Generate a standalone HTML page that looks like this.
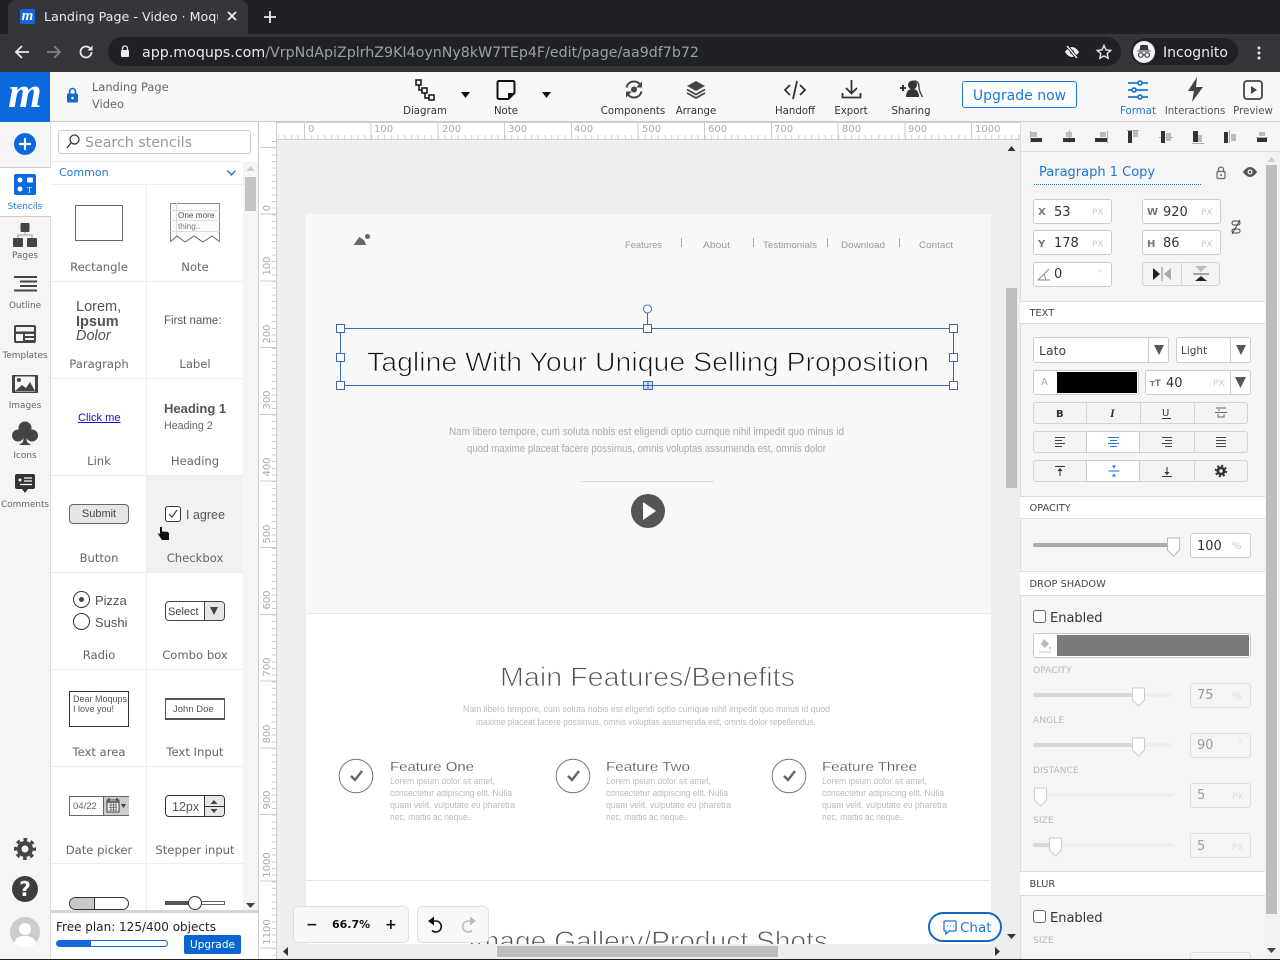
<!DOCTYPE html>
<html lang="en"><head><meta charset="utf-8"><title>Landing Page - Video · Moqups</title>
<style>
html,body{margin:0;padding:0;width:1280px;height:960px;overflow:hidden;background:#f5f5f5}
body{position:relative;font-family:"DejaVu Sans","Liberation Sans",sans-serif;color:#333}
.a{position:absolute;box-sizing:border-box}
.t{position:absolute;white-space:nowrap;line-height:14px;height:14px;margin-top:1px}
.c{text-align:center}
.tb{font-size:10.2px;color:#333;width:90px;text-align:center;margin-top:2px}
.rl{font-size:8.900px;color:#666;width:50px;left:0;text-align:center;margin-top:4px}
.sl{font-size:11.600px;color:#666;text-align:center;width:96px;margin-top:0}
.sec{position:absolute;left:1020px;width:245px;background:#fff;border-top:1px solid #ddd;border-bottom:1px solid #ddd;font-size:9.800px;color:#444;padding-left:9.500px;box-sizing:border-box}
.inp{position:absolute;background:#fff;border:1px solid #ccc;border-radius:3px;box-sizing:border-box}
.pv{font-size:13px;color:#333;margin-top:2px}
.u{font-size:9px;color:#ccc}
.lab{font-size:9.200px;color:#bbb;margin-top:2px}
.track{position:absolute;height:4px;background:#eee;border-radius:2px;left:1033px;width:140px}
.fill{position:absolute;height:4px;background:#d8d8d8;border-radius:2px;left:1033px}
.btn{position:absolute;background:#f3f3f3;border:1px solid #d4d4d4;box-sizing:border-box}
svg{position:absolute;overflow:visible}
</style></head><body>

<!-- browser chrome -->
<div class="a" style="left:0;top:0;width:1280px;height:34px;background:#202124"></div>
<div class="a" style="left:8px;top:0;width:240px;height:34px;background:#35363a;border-radius:8px 8px 0 0"></div>
<div class="a" style="left:20px;top:9px;width:15px;height:15px;background:#1467d6;border-radius:2px"></div>
<div class="t" style="left:20px;top:8px;width:15px;text-align:center;color:#fff;font:italic bold 15px/15px 'Liberation Serif',serif">m</div>
<div class="t" style="left:44px;top:9px;width:174px;overflow:hidden;color:#e8eaed;font-size:12.700px">Landing Page - Video · Moqups</div>
<svg style="left:226px;top:10px" width="12" height="12" viewBox="0 0 12 12"><path d="M2 2l8 8M10 2l-8 8" stroke="#e8eaed" stroke-width="1.8"/></svg>
<svg style="left:263px;top:10px" width="14" height="14" viewBox="0 0 14 14"><path d="M7 1v12M1 7h12" stroke="#e8eaed" stroke-width="1.8"/></svg>
<div class="a" style="left:0;top:34px;width:1280px;height:38px;background:#35363a"></div>
<svg style="left:14px;top:44px" width="16" height="16" viewBox="0 0 16 16"><path d="M15 8H2M8 2L2 8l6 6" fill="none" stroke="#e8eaed" stroke-width="1.8"/></svg>
<svg style="left:46px;top:44px" width="16" height="16" viewBox="0 0 16 16"><path d="M1 8h13M8 2l6 6-6 6" fill="none" stroke="#7d7f83" stroke-width="1.8"/></svg>
<svg style="left:78px;top:44px" width="16" height="16" viewBox="0 0 16 16"><path d="M13.5 8a5.5 5.5 0 1 1-1.6-3.9" fill="none" stroke="#e8eaed" stroke-width="1.8"/><path d="M14.5 1.5v5h-5z" fill="#e8eaed"/></svg>
<div class="a" style="left:108px;top:37px;width:1013px;height:29px;background:#202124;border-radius:15px"></div>
<svg style="left:120px;top:45px" width="10" height="13" viewBox="0 0 10 13"><path d="M2.5 5V3.5a2.5 2.5 0 0 1 5 0V5" fill="none" stroke="#e8eaed" stroke-width="1.3"/><rect x="1" y="5" width="8" height="7" rx="1" fill="#e8eaed"/></svg>
<div class="t" style="left:142px;top:45px;font-size:14.220px;color:#9aa0a6"><span style="color:#e8eaed">app.moqups.com</span>/VrpNdApiZplrhZ9KI4oynNy8kW7TEp4F/edit/page/aa9df7b72</div>
<svg style="left:1064px;top:44px" width="16" height="16" viewBox="0 0 16 16"><path d="M1 8s3-5 7-5 7 5 7 5-3 5-7 5-7-5-7-5z" fill="#e8eaed"/><circle cx="8" cy="8" r="2" fill="#202124"/><path d="M3 2l10 12" stroke="#202124" stroke-width="3"/><path d="M3 2l10 12" stroke="#e8eaed" stroke-width="1.4"/></svg>
<svg style="left:1096px;top:44px" width="16" height="16" viewBox="0 0 16 16"><path d="M8 1.5l2 4.4 4.700.5-3.500 3.200 1 4.700L8 11.900l-4.200 2.400 1-4.700L1.300 6.400 6 5.900z" fill="none" stroke="#e8eaed" stroke-width="1.4"/></svg>
<div class="a" style="left:1131px;top:38px;width:107px;height:27px;background:#202124;border-radius:14px"></div>
<div class="a" style="left:1133px;top:41px;width:22px;height:22px;background:#f1f3f4;border-radius:50%"></div>
<svg style="left:1136px;top:44px" width="16" height="16" viewBox="0 0 16 16"><path d="M4.500 1h7l1 5h-9zM1.500 6.500h13v1h-13z" fill="#35363a"/><circle cx="4.800" cy="11" r="2.300" fill="none" stroke="#35363a" stroke-width="1.100"/><circle cx="11.200" cy="11" r="2.300" fill="none" stroke="#35363a" stroke-width="1.100"/><path d="M7 11h2" stroke="#35363a"/></svg>
<div class="t" style="left:1163px;top:45px;font-size:14px;color:#e8eaed">Incognito</div>
<svg style="left:1257px;top:46px" width="4" height="14" viewBox="0 0 4 14"><circle cx="2" cy="2" r="1.500" fill="#e8eaed"/><circle cx="2" cy="7" r="1.500" fill="#e8eaed"/><circle cx="2" cy="12" r="1.500" fill="#e8eaed"/></svg>

<!-- app header -->
<div class="a" style="left:0;top:72px;width:1280px;height:50px;background:#f8f8f8;border-bottom:1px solid #ccc"></div>
<div class="a" style="left:0;top:72px;width:50px;height:50px;background:#0a69dc"></div>
<div class="t c" style="left:0;top:71px;width:50px;height:44px;color:#fff;font:italic bold 43px/44px 'Liberation Serif',serif">m</div>
<svg style="left:66px;top:87px" width="13" height="16" viewBox="0 0 13 16"><path d="M3.500 7V4.500a3 3 0 0 1 6 0V7" fill="none" stroke="#1268d6" stroke-width="1.600"/><rect x="1" y="6.500" width="11" height="9" rx="1.500" fill="#1268d6"/><circle cx="6.500" cy="11" r="1.300" fill="#fff"/></svg>
<div class="t" style="left:92px;top:79px;font-size:11.400px;color:#666">Landing Page</div>
<div class="t" style="left:92px;top:96px;font-size:11.400px;color:#666">Video</div>

<svg style="left:415px;top:79px" width="22" height="22" viewBox="0 0 22 22" fill="none" stroke="#111" stroke-width="1.500"><rect x="1" y="1" width="5" height="5"/><rect x="7" y="9" width="5" height="5"/><rect x="14" y="16" width="5" height="5"/><path d="M4 6v5h3M10 14v5h4"/></svg>
<div class="t tb" style="left:380px;top:103px">Diagram</div>
<svg style="left:461px;top:92px" width="9" height="6"><path d="M0 0h9L4.500 6z" fill="#111"/></svg>
<svg style="left:496px;top:80px" width="20" height="20" viewBox="0 0 20 20"><path d="M3 1h14a1.500 1.500 0 0 1 1.500 1.500V13l-6 6H3a1.500 1.500 0 0 1-1.500-1.500v-15A1.500 1.500 0 0 1 3 1z" fill="none" stroke="#111" stroke-width="2"/><path d="M18 13h-6v6z" fill="#111"/></svg>
<div class="t tb" style="left:461px;top:103px">Note</div>
<svg style="left:542px;top:92px" width="9" height="6"><path d="M0 0h9L4.500 6z" fill="#111"/></svg>
<svg style="left:624px;top:80px" width="20" height="19" viewBox="0 0 20 19" fill="none" stroke="#444" stroke-width="2"><path d="M2.500 7.500C3.500 3.500 6.500 1.500 10 1.500c2.500 0 4.500 1 6 3"/><path d="M17.500 11.500c-1 4-4 6-7.500 6-2.500 0-4.500-1-6-3"/><circle cx="10" cy="9.500" r="3" fill="#444" stroke="none"/><path d="M19 1.500v6h-6z" fill="#444" stroke="none" transform="translate(-1 0) scale(1)"/><path d="M1 17.500v-6h6z" fill="#444" stroke="none" transform="translate(1 0)"/></svg>
<div class="t tb" style="left:588px;top:103px">Components</div>
<svg style="left:686px;top:80px" width="20" height="19" viewBox="0 0 20 19"><path d="M10 1l9 5-9 5-9-5z" fill="#444"/><path d="M1 9.500l9 5 9-5M1 13l9 5 9-5" fill="none" stroke="#444" stroke-width="1.800"/></svg>
<div class="t tb" style="left:651px;top:103px">Arrange</div>
<svg style="left:784px;top:80px" width="22" height="20" viewBox="0 0 22 20" fill="none" stroke="#333" stroke-width="1.800"><path d="M6 5l-5 5 5 5M16 5l5 5-5 5M13 1L9 19"/></svg>
<div class="t tb" style="left:750px;top:103px">Handoff</div>
<svg style="left:841px;top:79px" width="21" height="21" viewBox="0 0 21 21" fill="none" stroke="#333" stroke-width="1.800"><path d="M10.500 1v13M5 9l5.500 5.500L16 9M1.500 14v4.500h18V14"/></svg>
<div class="t tb" style="left:806px;top:103px">Export</div>
<svg style="left:899px;top:80px" width="25" height="18" viewBox="0 0 25 18"><path d="M1 8h6M4 5v6" stroke="#222" stroke-width="1.800"/><circle cx="13.500" cy="5" r="4.500" fill="#333"/><path d="M7 17c0-6 3-8 6.500-8s6.500 2 6.500 8z" fill="#333"/><path d="M15 1c4 0 5 3 5 6s1 5 3.500 10" fill="none" stroke="#444" stroke-width="1.400"/></svg>
<div class="t tb" style="left:866px;top:103px">Sharing</div>
<div class="a" style="left:962px;top:81px;width:115px;height:27px;background:#fff;border:1px solid #1c78d4;border-radius:3px;color:#1c78d4;font-size:14px;line-height:27px;padding-top:1px;text-align:center">Upgrade now</div>
<svg style="left:1128px;top:80px" width="20" height="20" viewBox="0 0 20 20" fill="none" stroke="#1c78d4" stroke-width="1.800"><path d="M0 3h20M0 10h20M0 17h20"/><circle cx="12" cy="3" r="2" fill="#fff"/><circle cx="6" cy="10" r="2" fill="#fff"/><circle cx="12" cy="17" r="2" fill="#fff"/></svg>
<div class="t tb" style="left:1093px;top:103px;color:#1c78d4">Format</div>
<svg style="left:1187px;top:77px" width="17" height="25" viewBox="0 0 17 25"><path d="M10 0L1 14h6L5 25l11-15h-7z" fill="#444"/></svg>
<div class="t tb" style="left:1150px;top:103px;color:#555">Interactions</div>
<svg style="left:1243px;top:80px" width="20" height="20" viewBox="0 0 20 20"><rect x="1" y="1" width="18" height="18" rx="3" fill="none" stroke="#444" stroke-width="1.800"/><path d="M8 6l6 4-6 4z" fill="#444"/></svg>
<div class="t tb" style="left:1208px;top:103px;color:#555">Preview</div>

<!-- left rail -->
<div class="a" style="left:0;top:122px;width:51px;height:838px;background:#f5f5f5;border-right:1px solid #ddd"></div>
<div class="a" style="left:0;top:167px;width:51px;height:50px;background:#fff;border-top:1px solid #ccc;border-bottom:1px solid #ccc"></div>
<svg style="left:14px;top:133px" width="22" height="22" viewBox="0 0 22 22"><circle cx="11" cy="11" r="11" fill="#0a69dc"/><path d="M11 5v12M5 11h12" stroke="#fff" stroke-width="2.200"/></svg>
<svg style="left:14px;top:174px" width="22" height="21" viewBox="0 0 22 21"><rect width="22" height="21" rx="2" fill="#0a69dc"/><circle cx="6" cy="6" r="2.500" fill="#fff"/><rect x="13" y="3.500" width="6" height="5" rx="1" fill="#fff"/><circle cx="6" cy="15" r="2.500" fill="#fff"/><text x="13" y="18.500" font-size="8" font-family="Liberation Serif" fill="#fff">T</text></svg>
<div class="t rl" style="top:196px;color:#1c78d4">Stencils</div>
<svg style="left:13px;top:223px" width="24" height="26" viewBox="0 0 24 26" fill="#444"><rect x="7.500" y="0" width="9" height="9" rx="1"/><rect x="0" y="15" width="10" height="9" rx="1"/><rect x="14" y="15" width="10" height="9" rx="1"/><path d="M12 9v3M5 15v-3h14v3" fill="none" stroke="#999"/></svg>
<div class="t rl" style="top:245px">Pages</div>
<svg style="left:14px;top:276px" width="23" height="18" viewBox="0 0 23 18" stroke="#444" stroke-width="2"><path d="M0 1h23M6 5.500h17M6 10h17M0 14.500h23"/></svg>
<div class="t rl" style="top:295px">Outline</div>
<svg style="left:14px;top:325px" width="22" height="18" viewBox="0 0 22 18"><rect width="22" height="18" rx="2" fill="#444"/><rect x="2" y="2" width="18" height="4.500" fill="#f5f5f5"/><rect x="2" y="9" width="7" height="7" fill="#f5f5f5"/><rect x="11" y="9" width="9" height="2" fill="#f5f5f5"/><rect x="11" y="13" width="9" height="2" fill="#f5f5f5"/></svg>
<div class="t rl" style="top:345px">Templates</div>
<svg style="left:12px;top:375px" width="26" height="18" viewBox="0 0 26 18"><rect width="26" height="18" rx="1" fill="#444"/><rect x="3" y="1.500" width="20" height="15" fill="#f5f5f5"/><circle cx="7" cy="5" r="2" fill="#444"/><path d="M3 16l7-6 4 3 4-6 5 9z" fill="#444"/></svg>
<div class="t rl" style="top:395px">Images</div>
<svg style="left:12px;top:421px" width="26" height="25" viewBox="0 0 26 25" fill="#444"><circle cx="13" cy="7" r="6.500"/><circle cx="6" cy="14.500" r="6"/><circle cx="20" cy="14.500" r="6"/><path d="M12 12h2l1 9 4 3H7l4-3z"/></svg>
<div class="t rl" style="top:445px">Icons</div>
<svg style="left:15px;top:474px" width="20" height="19" viewBox="0 0 20 19"><path d="M2 0h16a2 2 0 0 1 2 2v11a2 2 0 0 1-2 2h-5l-3 4-3-4H2a2 2 0 0 1-2-2V2a2 2 0 0 1 2-2z" fill="#333"/><circle cx="5" cy="6" r="1.500" fill="#fff"/><path d="M9 4h8M9 7h8M5 10.500h12" stroke="#fff" stroke-width="1.200"/></svg>
<div class="t rl" style="top:494px">Comments</div>
<svg style="left:14px;top:838px" width="22" height="22" viewBox="0 0 22 22"><circle cx="11" cy="11" r="8" fill="#444"/><circle cx="11" cy="11" r="9.500" fill="none" stroke="#444" stroke-width="3" stroke-dasharray="3.700 3.760" stroke-dashoffset="1.800"/><circle cx="11" cy="11" r="3.500" fill="#f5f5f5"/></svg>
<div class="a" style="left:12px;top:876px;width:26px;height:26px;border-radius:50%;background:#3d3d3d;color:#fff;font:bold 20px/26px 'DejaVu Sans';text-align:center">?</div>
<svg style="left:10px;top:917px" width="30" height="30" viewBox="0 0 30 30"><circle cx="15" cy="15" r="15" fill="#ccc"/><circle cx="15" cy="12" r="6" fill="#fff"/><path d="M4 26c2-6 6-7 11-7s9 1 11 7a15 15 0 0 1-22 0z" fill="#fff"/></svg>

<!-- stencil panel -->
<div class="a" style="left:51px;top:122px;width:208px;height:838px;background:#fff;border-right:1px solid #ccc"></div>
<div class="a" style="left:58px;top:130px;width:193px;height:24px;border:1px solid #ccc;border-radius:3px;background:#fff"></div>
<svg style="left:66px;top:134px" width="14" height="15" viewBox="0 0 14 15" fill="none" stroke="#333" stroke-width="1.300"><circle cx="8.500" cy="5.500" r="4.500"/><path d="M5 9l-4 5"/></svg>
<div class="t" style="left:85px;top:135px;font-size:14.2px;color:#999">Search stencils</div>
<div class="a" style="left:51px;top:161px;width:192px;height:1px;background:#eee"></div>
<div class="t" style="left:59px;top:165px;font-size:11px;color:#1c78d4">Common</div>
<svg style="left:227px;top:170px" width="9" height="6"><path d="M.5.500L4.500 5 8.500.5" fill="none" stroke="#1c78d4" stroke-width="1.400"/></svg>
<div class="a" style="left:51px;top:184px;width:192px;height:1px;background:#eee"></div>
<!-- grid lines -->
<div class="a" style="left:51px;top:281px;width:192px;height:1px;background:#eee"></div>
<div class="a" style="left:51px;top:378px;width:192px;height:1px;background:#eee"></div>
<div class="a" style="left:51px;top:475px;width:192px;height:1px;background:#eee"></div>
<div class="a" style="left:147px;top:476px;width:96px;height:96px;background:#f1f1f1"></div>
<div class="a" style="left:51px;top:572px;width:192px;height:1px;background:#eee"></div>
<div class="a" style="left:51px;top:669px;width:192px;height:1px;background:#eee"></div>
<div class="a" style="left:51px;top:766px;width:192px;height:1px;background:#eee"></div>
<div class="a" style="left:51px;top:863px;width:192px;height:1px;background:#eee"></div>
<div class="a" style="left:146px;top:185px;width:1px;height:725px;background:#eee"></div>
<!-- labels -->
<div class="t sl" style="left:51px;top:260px">Rectangle</div><div class="t sl" style="left:147px;top:260px">Note</div>
<div class="t sl" style="left:51px;top:357px">Paragraph</div><div class="t sl" style="left:147px;top:357px">Label</div>
<div class="t sl" style="left:51px;top:454px">Link</div><div class="t sl" style="left:147px;top:454px">Heading</div>
<div class="t sl" style="left:51px;top:551px">Button</div><div class="t sl" style="left:147px;top:551px">Checkbox</div>
<div class="t sl" style="left:51px;top:648px">Radio</div><div class="t sl" style="left:147px;top:648px">Combo box</div>
<div class="t sl" style="left:51px;top:745px">Text area</div><div class="t sl" style="left:147px;top:745px">Text Input</div>
<div class="t sl" style="left:51px;top:843px">Date picker</div><div class="t sl" style="left:147px;top:843px">Stepper input</div>
<!-- widgets -->
<div class="a" style="left:75px;top:205px;width:48px;height:36px;border:1px solid #666;background:#fff"></div>
<div class="a" style="left:170px;top:203px;width:50px;height:38px;background:#fbfbfb;border:1px solid #888;border-bottom:none"></div>
<div class="a" style="left:170px;top:210px;width:50px;height:1px;background:#ddd"></div><div class="a" style="left:170px;top:220px;width:50px;height:1px;background:#ddd"></div><div class="a" style="left:170px;top:231px;width:50px;height:1px;background:#ddd"></div><div class="a" style="left:176px;top:203px;width:1px;height:38px;background:#ddd"></div>
<div class="t" style="left:178px;top:209px;font:8.200px/12px 'Liberation Sans';color:#555">One more</div>
<div class="t" style="left:178px;top:220px;font:8.200px/12px 'Liberation Sans';color:#777">thing..</div>
<svg style="left:170px;top:234px" width="50" height="10"><path d="M0 8l7-6 8 6 9-6 9 6 9-6 8 6" fill="#fff" stroke="#666"/></svg>
<div class="t" style="left:76px;top:298px;height:16px;font:14.500px/16px 'Liberation Sans';color:#555">Lorem,</div>
<div class="t" style="left:76px;top:313px;height:16px;font:bold 14.500px/16px 'Liberation Sans';color:#555">Ipsum</div>
<div class="t" style="left:76px;top:327px;height:16px;font:italic 14.500px/16px 'Liberation Sans';color:#555">Dolor</div>
<div class="t" style="left:164px;top:313px;font:11.500px/14px 'Liberation Sans';color:#555">First name:</div>
<div class="t" style="left:78px;top:410px;font:11.100px/14px 'Liberation Sans';color:#1111cc;text-decoration:underline">Click me</div>
<div class="t" style="left:164px;top:401px;font:bold 13px/14px 'Liberation Sans';color:#555">Heading 1</div>
<div class="t" style="left:164px;top:418px;font:10.700px/14px 'Liberation Sans';color:#666">Heading 2</div>
<div class="a" style="left:69px;top:504px;width:60px;height:20px;background:#e6e6e6;border:1px solid #666;border-radius:4px;font:11px/19px 'Liberation Sans';color:#444;text-align:center">Submit</div>
<div class="a" style="left:165px;top:506px;width:16px;height:16px;background:#fff;border:1px solid #333;border-radius:3px"></div>
<svg style="left:168px;top:509px" width="10" height="10"><path d="M1 5l3 3 5-7" fill="none" stroke="#333" stroke-width="1.100"/></svg>
<div class="t" style="left:186px;top:507px;font:12.500px/14px 'Liberation Sans';color:#555">I agree</div>
<svg style="left:157px;top:526px" width="13" height="14" viewBox="0 0 13 14"><path d="M3 1h2v5l1-1 1 1 1-.5 1 .5 1-.5 2 1.500v7H5L1 8l1-1 1 1.500z" fill="#111"/></svg>
<div class="a" style="left:73px;top:591px;width:17px;height:17px;border:1px solid #333;border-radius:50%;background:#fff"></div>
<div class="a" style="left:79px;top:597px;width:5px;height:5px;border-radius:50%;background:#444"></div>
<div class="a" style="left:73px;top:613px;width:17px;height:17px;border:1px solid #333;border-radius:50%;background:#fff"></div>
<div class="t" style="left:95px;top:593px;font:13px/14px 'Liberation Sans';color:#555">Pizza</div>
<div class="t" style="left:95px;top:615px;font:13px/14px 'Liberation Sans';color:#555">Sushi</div>
<div class="a" style="left:165px;top:601px;width:60px;height:20px;background:#fff;border:1px solid #444;border-radius:4px;overflow:hidden"><div class="a" style="left:38px;top:0;width:21px;height:19px;background:#e6e6e6;border-left:1px solid #444"></div></div>
<div class="t" style="left:168px;top:604px;font:11px/14px 'Liberation Sans';color:#444">Select</div>
<svg style="left:209px;top:607px" width="10" height="8"><path d="M1 0h8L5 8z" fill="#444"/></svg>
<div class="a" style="left:69px;top:691px;width:60px;height:36px;background:#fff;border:1px solid #333"></div>
<div class="t" style="left:73px;top:693px;font:9px/11px 'Liberation Sans';color:#555;height:11px">Dear Moqups,</div>
<div class="t" style="left:73px;top:703px;font:9px/11px 'Liberation Sans';color:#555;height:11px">I love you!</div>
<div class="a" style="left:165px;top:698px;width:60px;height:22px;background:#fff;border:1px solid #555;border-top-width:2px;border-bottom-width:2px"></div>
<div class="t" style="left:173px;top:702px;font:9.500px/14px 'Liberation Sans';color:#555">John Doe</div>
<div class="a" style="left:69px;top:796px;width:60px;height:20px;background:#fff;border:1px solid #666"><div class="a" style="left:33px;top:0;width:26px;height:18px;background:#ccc;border-left:1px solid #666"></div></div>
<div class="t" style="left:73px;top:799px;font:9.500px/14px 'Liberation Sans';color:#666">04/22</div>
<svg style="left:106px;top:797px" width="22" height="17" viewBox="0 0 22 17"><rect x="1" y="3" width="12" height="12" fill="#eee" stroke="#444"/><path d="M1 5h12M3 1v3M11 1v3" stroke="#444" stroke-width="1.500"/><path d="M3 8h8M3 10.500h8M3 13h8M5 6v8M7.500 6v8M10 6v8" stroke="#666" stroke-width=".8"/><path d="M15 7h5l-2.500 4z" fill="#444"/></svg>
<div class="a" style="left:165px;top:795px;width:60px;height:22px;background:#fff;border:1px solid #333;border-radius:4px;overflow:hidden"><div class="a" style="left:38px;top:0;width:21px;height:20px;background:#e6e6e6;border-left:1px solid #333"></div><div class="a" style="left:38px;top:10px;width:21px;height:1px;background:#333"></div></div>
<div class="t" style="left:172px;top:799px;font:12.500px/14px 'Liberation Sans';color:#555">12px</div>
<svg style="left:209px;top:800px" width="10" height="14"><path d="M5 0l3.500 4h-7zM1.500 9h7L5 13z" fill="#444"/></svg>
<div class="a" style="left:69px;top:897px;width:60px;height:13px;background:#fff;border:1px solid #333;border-radius:7px;overflow:hidden"><div class="a" style="left:0;top:0;width:25px;height:11px;background:#c8c8c8;border-right:1px solid #333"></div></div>
<div class="a" style="left:165px;top:901px;width:60px;height:4px;background:#fff;border:1px solid #666"></div>
<div class="a" style="left:165px;top:901px;width:25px;height:4px;background:#555"></div>
<div class="a" style="left:188px;top:896px;width:14px;height:14px;background:#fff;border:1px solid #333;border-radius:50%"></div>
<!-- stencil scrollbar -->
<div class="a" style="left:243px;top:162px;width:15px;height:748px;background:#f5f5f5"></div>
<svg style="left:246px;top:166px" width="9" height="6"><path d="M4.500 0l4 5h-8z" fill="#ccc"/></svg>
<div class="a" style="left:245px;top:177px;width:11px;height:34px;background:#c4c4c4"></div>
<svg style="left:246px;top:903px" width="9" height="6"><path d="M0 0h9L4.500 5z" fill="#444"/></svg>
<!-- plan -->
<div class="a" style="left:51px;top:910px;width:207px;height:50px;background:#fff;border-top:3px solid #d5d5d5"></div>
<div class="t" style="left:56px;top:919px;font-size:12px;color:#222">Free plan: 125/400 objects</div>
<div class="a" style="left:56px;top:940px;width:112px;height:7px;border:1px solid #1268d6;border-radius:4px;background:#fff;overflow:hidden"><div style="width:34px;height:5px;background:#1268d6"></div></div>
<div class="a" style="left:184px;top:935px;width:57px;height:19px;background:#0a66cf;border-radius:2px;color:#fff;font-size:10.500px;line-height:20px;text-align:center">Upgrade</div>

<!-- canvas -->
<div class="a" style="left:259px;top:122px;width:761px;height:838px;background:#eee"></div>
<!-- rulers -->
<div class="a" style="left:259px;top:122px;width:761px;height:18px;background:#fff;border-bottom:1px solid #ccc;border-top:1px solid #ccc"></div>
<div class="a" style="left:259px;top:122px;width:18px;height:838px;background:#fff;border-right:1px solid #ccc"></div>
<div class="a" style="left:278px;top:135px;width:742px;height:4px;background:repeating-linear-gradient(90deg,#ccc 0 1px,transparent 1px 6.670px);background-position:-.3px 0"></div>
<div class="a" style="left:304px;top:123px;width:716px;height:16px;background:repeating-linear-gradient(90deg,#ccc 0 1px,transparent 1px 66.700px)"></div>
<div class="a" style="left:272px;top:141px;width:4px;height:819px;background:repeating-linear-gradient(180deg,#ccc 0 1px,transparent 1px 6.670px)"></div>
<div class="a" style="left:260px;top:147.300px;width:16px;height:812px;background:repeating-linear-gradient(180deg,#ccc 0 1px,transparent 1px 66.700px)"></div>
<div style="position:absolute;left:308px;top:122px;font-size:10px;color:#aaa;line-height:14px;height:14px;white-space:nowrap"><span class="t" style="left:0">0</span><span class="t" style="left:66px">100</span><span class="t" style="left:134px">200</span><span class="t" style="left:200px">300</span><span class="t" style="left:266px">400</span><span class="t" style="left:334px">500</span><span class="t" style="left:400px">600</span><span class="t" style="left:466px">700</span><span class="t" style="left:534px">800</span><span class="t" style="left:600px">900</span><span class="t" style="left:667px">1000</span></div>
<svg style="left:259px;top:140px" width="18" height="820"><g font-family="DejaVu Sans" font-size="10" fill="#aaa" text-anchor="middle"><text transform="translate(11 68) rotate(-90)">0</text><text transform="translate(11 126) rotate(-90)">100</text><text transform="translate(11 194) rotate(-90)">200</text><text transform="translate(11 260) rotate(-90)">300</text><text transform="translate(11 327) rotate(-90)">400</text><text transform="translate(11 394) rotate(-90)">500</text><text transform="translate(11 460) rotate(-90)">600</text><text transform="translate(11 527) rotate(-90)">700</text><text transform="translate(11 594) rotate(-90)">800</text><text transform="translate(11 660) rotate(-90)">900</text><text transform="translate(11 725) rotate(-90)">1000</text><text transform="translate(11 792) rotate(-90)">1100</text></g></svg>

<!-- artboard -->
<div class="a" style="left:306px;top:214px;width:685px;height:730px;background:#fff"></div>
<div class="a" style="left:306px;top:214px;width:685px;height:400px;background:#f8f8f9;border-bottom:1px solid #e9e9e9"></div>
<div class="a" style="left:306px;top:880px;width:684px;height:1px;background:#e6e6e6"></div>
<svg style="left:354px;top:232px" width="17" height="14" viewBox="0 0 17 14"><path d="M.5 12.500l5-7 4 3 2 4z" fill="#666" stroke="#666" stroke-linejoin="round"/><circle cx="13.500" cy="4.500" r="2.500" fill="#666"/></svg>

<svg style="left:0;top:0" width="1280" height="960" font-family="'Liberation Sans',sans-serif">
<g font-size="9.300" fill="#999"><text x="625" y="248" textLength="37" lengthAdjust="spacingAndGlyphs">Features</text><text x="703" y="248" textLength="27" lengthAdjust="spacingAndGlyphs">About</text><text x="763" y="248" textLength="54" lengthAdjust="spacingAndGlyphs">Testimonials</text><text x="841" y="248" textLength="44" lengthAdjust="spacingAndGlyphs">Download</text><text x="919" y="248" textLength="34" lengthAdjust="spacingAndGlyphs">Contact</text></g>
<g stroke="#aaa"><path d="M681.500 238v9M753.500 238v9M827.500 238v9M899.500 238v9"/></g>
<text x="367" y="371" font-size="27" fill="#111" stroke="#f8f8f9" stroke-width=".85" textLength="562" lengthAdjust="spacingAndGlyphs">Tagline With Your Unique Selling Proposition</text>
<g font-size="10.700" fill="#aaa"><text x="449" y="435" textLength="395" lengthAdjust="spacingAndGlyphs">Nam libero tempore, cum soluta nobis est eligendi optio cumque nihil impedit quo minus id</text><text x="467" y="452" textLength="359" lengthAdjust="spacingAndGlyphs">quod maxime placeat facere possimus, omnis voluptas assumenda est, omnis dolor</text></g>
<path d="M581 481.500h133" stroke="#ddd"/>
<circle cx="648" cy="511" r="17" fill="#555"/><path d="M643 502l13 9-13 9z" fill="#fff"/>
<text x="500" y="686" font-size="27" fill="#555" stroke="#fff" stroke-width=".85" textLength="295" lengthAdjust="spacingAndGlyphs">Main Features/Benefits</text>
<g font-size="9.300" fill="#bbb"><text x="463" y="712" textLength="367" lengthAdjust="spacingAndGlyphs">Nam libero tempore, cum soluta nobis est eligendi optio cumque nihil impedit quo minus id quod</text><text x="476" y="725" textLength="340" lengthAdjust="spacingAndGlyphs">maxime placeat facere possimus, omnis voluptas assumenda est, omnis dolor repellendus.</text></g>
<g fill="none" stroke="#777"><circle cx="356" cy="776" r="16.800"/><circle cx="573" cy="776" r="16.800"/><circle cx="789" cy="776" r="16.800"/></g>
<g fill="none" stroke="#666" stroke-width="2.400"><path d="M351 776l4 4 7-9M568 776l4 4 7-9M784 776l4 4 7-9"/></g>
<g font-size="13.300" fill="#555" stroke="#fff" stroke-width=".2"><text x="390" y="771" textLength="84" lengthAdjust="spacingAndGlyphs">Feature One</text><text x="606" y="771" textLength="84" lengthAdjust="spacingAndGlyphs">Feature Two</text><text x="822" y="771" textLength="95" lengthAdjust="spacingAndGlyphs">Feature Three</text></g>
<g font-size="9.300" fill="#bbb">
<text x="390" y="784" textLength="105" lengthAdjust="spacingAndGlyphs">Lorem ipsum dolor sit amet,</text><text x="390" y="796" textLength="122" lengthAdjust="spacingAndGlyphs">consectetur adipiscing elit. Nulla</text><text x="390" y="808" textLength="125" lengthAdjust="spacingAndGlyphs">quam velit, vulputate eu pharetra</text><text x="390" y="820" textLength="80" lengthAdjust="spacingAndGlyphs">nec, mattis ac neque.</text>
<text x="606" y="784" textLength="105" lengthAdjust="spacingAndGlyphs">Lorem ipsum dolor sit amet,</text><text x="606" y="796" textLength="122" lengthAdjust="spacingAndGlyphs">consectetur adipiscing elit. Nulla</text><text x="606" y="808" textLength="125" lengthAdjust="spacingAndGlyphs">quam velit, vulputate eu pharetra</text><text x="606" y="820" textLength="80" lengthAdjust="spacingAndGlyphs">nec, mattis ac neque.</text>
<text x="822" y="784" textLength="105" lengthAdjust="spacingAndGlyphs">Lorem ipsum dolor sit amet,</text><text x="822" y="796" textLength="122" lengthAdjust="spacingAndGlyphs">consectetur adipiscing elit. Nulla</text><text x="822" y="808" textLength="125" lengthAdjust="spacingAndGlyphs">quam velit, vulputate eu pharetra</text><text x="822" y="820" textLength="80" lengthAdjust="spacingAndGlyphs">nec, mattis ac neque.</text>
</g>
<text x="468" y="950" font-size="27" fill="#555" stroke="#fff" stroke-width=".85" textLength="360" lengthAdjust="spacingAndGlyphs">Image Gallery/Product Shots</text>
<!-- selection -->
<g fill="#fff" stroke="#3f68b2"><path d="M340.500 328.500h613v57h-613z" fill="none"/><path d="M647.500 313v15" fill="none"/><circle cx="647.500" cy="309" r="4"/><rect x="336.500" y="324.500" width="8" height="8"/><rect x="643.500" y="324.500" width="8" height="8"/><rect x="949.500" y="324.500" width="8" height="8"/><rect x="336.500" y="353.500" width="8" height="8"/><rect x="949.500" y="353.500" width="8" height="8"/><rect x="336.500" y="381.500" width="8" height="8"/><rect x="949.500" y="381.500" width="8" height="8"/><rect x="643.500" y="381.500" width="9" height="8" fill="#cfe0f5"/><path d="M648 381.500v8M643.500 385.500h9" fill="none"/></g>
</svg>

<!-- canvas scrollbars -->
<div class="a" style="left:1002px;top:140px;width:18px;height:804px;background:#eee"></div>
<svg style="left:1007px;top:146px" width="9" height="6"><path d="M4.500 0l4 5h-8z" fill="#333"/></svg>
<div class="a" style="left:1006px;top:288px;width:11px;height:200px;background:#bdbdbd"></div>
<svg style="left:1007px;top:934px" width="9" height="6"><path d="M0 0h9L4.500 5z" fill="#333"/></svg>
<div class="a" style="left:277px;top:944px;width:743px;height:15px;background:#eee"></div>
<svg style="left:283px;top:947px" width="6" height="9"><path d="M5 0v9L0 4.500z" fill="#333"/></svg>
<div class="a" style="left:497px;top:946px;width:281px;height:11px;background:#bdbdbd"></div>
<svg style="left:995px;top:947px" width="6" height="9"><path d="M0 0v9l5-4.500z" fill="#333"/></svg>
<!-- zoom controls -->
<div class="a" style="left:293px;top:906px;width:116px;height:37px;background:#f8f8f8;border:1px solid #e0e0e0;border-radius:5px"></div>
<div class="t" style="left:306px;top:917px;font-size:14px;font-weight:bold;color:#111">−</div>
<div class="t" style="left:332px;top:917px;font-size:11px;font-weight:bold;color:#111">66.7%</div>
<div class="t" style="left:385px;top:917px;font-size:14px;font-weight:bold;color:#111">+</div>
<div class="a" style="left:417px;top:906px;width:72px;height:37px;background:#f8f8f8;border:1px solid #e0e0e0;border-radius:5px"></div>
<svg style="left:427px;top:916px" width="16" height="18" viewBox="0 0 16 18"><path d="M3 5h6a5.500 5.500 0 1 1-4 9.500" fill="none" stroke="#111" stroke-width="1.600"/><path d="M7 .5v9L1 5z" fill="#111"/></svg>
<svg style="left:461px;top:916px" width="16" height="18" viewBox="0 0 16 18"><path d="M13 5H7a5.500 5.500 0 1 0 4 9.500" fill="none" stroke="#bbb" stroke-width="1.600"/><path d="M9 .5v9L15 5z" fill="#bbb"/></svg>
<!-- chat -->
<div class="a" style="left:928px;top:912px;width:74px;height:30px;background:#fff;border:2px solid #1268c8;border-radius:15px"></div>
<svg style="left:943px;top:920px" width="14" height="15" viewBox="0 0 14 15"><path d="M2 1h10a1 1 0 0 1 1 1v8a1 1 0 0 1-1 1H6l-3 3v-3H2a1 1 0 0 1-1-1V2a1 1 0 0 1 1-1z" fill="none" stroke="#1c78d4" stroke-width="1.300"/><path d="M4 6h1M7 6h1M10 6h1" stroke="#1c78d4" stroke-width="1.300"/></svg>
<div class="t" style="left:960px;top:920px;font-size:13.500px;color:#1c78d4">Chat</div>

<!-- right panel -->
<div class="a" style="left:1020px;top:122px;width:260px;height:838px;background:#f5f5f5;border-left:1px solid #ddd"></div>
<div class="a" style="left:1021px;top:151px;width:259px;height:1px;background:#ddd"></div>
<svg style="left:0;top:0" width="1280" height="960">
<g fill="#333">
<rect x="1030" y="131" width="1" height="12" fill="#aaa"/><rect x="1031" y="138" width="11" height="4"/><rect x="1031" y="132" width="6" height="5" fill="#bbb"/>
<rect x="1069" y="130" width="1" height="13" fill="#aaa"/><rect x="1063" y="138" width="12" height="4"/><rect x="1066" y="132" width="6" height="5" fill="#bbb"/>
<rect x="1107" y="131" width="1" height="12" fill="#aaa"/><rect x="1095" y="138" width="12" height="4"/><rect x="1100" y="132" width="6" height="5" fill="#bbb"/>
<rect x="1127" y="130" width="12" height="1" fill="#aaa"/><rect x="1128" y="131" width="4" height="12"/><rect x="1133" y="131" width="5" height="6" fill="#bbb"/>
<rect x="1159" y="137" width="14" height="1" fill="#aaa"/><rect x="1161" y="131" width="4" height="12"/><rect x="1166" y="133" width="5" height="8" fill="#bbb"/>
<rect x="1192" y="143" width="12" height="1" fill="#aaa"/><rect x="1193" y="131" width="5" height="11"/><rect x="1198" y="135" width="4" height="7" fill="#bbb"/>
<rect x="1229" y="130" width="1" height="13" fill="#aaa"/><rect x="1224" y="132" width="4" height="11"/><rect x="1231" y="134" width="5" height="7" fill="#bbb"/>
<rect x="1256" y="137" width="12" height="1" fill="#aaa"/><rect x="1257" y="138" width="10" height="4"/><rect x="1259" y="132" width="6" height="4" fill="#bbb"/>
</g></svg>
<div class="t" style="left:1039px;top:164px;font-size:13px;color:#1c78d4;margin-top:2px">Paragraph 1 Copy</div>
<div class="a" style="left:1034px;top:184px;width:167px;height:1px;border-top:1px dotted #1c78d4"></div>
<svg style="left:1216px;top:166px" width="10" height="13" viewBox="0 0 10 13"><path d="M2.500 6V3.500a2.500 2.500 0 0 1 5 0V6" fill="none" stroke="#666" stroke-width="1.200"/><rect x="1" y="5.500" width="8" height="7" rx="1" fill="none" stroke="#666" stroke-width="1.200"/><circle cx="5" cy="9" r="1" fill="#666"/></svg>
<svg style="left:1243px;top:167px" width="14" height="10" viewBox="0 0 14 10"><path d="M0 5s3-5 7-5 7 5 7 5-3 5-7 5-7-5-7-5z" fill="#555"/><circle cx="7" cy="5" r="2.500" fill="#f5f5f5"/><circle cx="7" cy="5" r="1.300" fill="#555"/></svg>
<div class="inp" style="left:1033px;top:199px;width:79px;height:25px"></div>
<div class="t" style="left:1038px;top:205px;font-size:10px;color:#777;font-weight:bold">X</div><div class="t pv" style="left:1054px;top:204px">53</div><div class="t u" style="left:1092px;top:205px">PX</div>
<div class="inp" style="left:1142px;top:199px;width:79px;height:25px"></div>
<div class="t" style="left:1147px;top:205px;font-size:10px;color:#777;font-weight:bold">W</div><div class="t pv" style="left:1163px;top:204px">920</div><div class="t u" style="left:1201px;top:205px">PX</div>
<div class="inp" style="left:1033px;top:230px;width:79px;height:25px"></div>
<div class="t" style="left:1038px;top:237px;font-size:10px;color:#777;font-weight:bold">Y</div><div class="t pv" style="left:1054px;top:235px">178</div><div class="t u" style="left:1092px;top:237px">PX</div>
<div class="inp" style="left:1142px;top:230px;width:79px;height:25px"></div>
<div class="t" style="left:1147px;top:237px;font-size:10px;color:#777;font-weight:bold">H</div><div class="t pv" style="left:1163px;top:235px">86</div><div class="t u" style="left:1201px;top:237px">PX</div>
<svg style="left:1230px;top:220px" width="12" height="14" viewBox="0 0 12 14" fill="none" stroke="#444"><rect x="2" y="1" width="8" height="4" rx="2"/><rect x="2" y="9" width="8" height="4" rx="2"/><path d="M10 0L2 14"/></svg>
<div class="inp" style="left:1033px;top:262px;width:79px;height:25px"></div>
<svg style="left:1037px;top:268px" width="14" height="13"><path d="M12 1L1 12h12M7 6l2 6" fill="none" stroke="#888"/></svg>
<div class="t pv" style="left:1054px;top:266px">0</div><div class="t u" style="left:1098px;top:266px">°</div>
<div class="btn" style="left:1142px;top:262px;width:78px;height:24px;border-radius:3px"></div>
<div class="a" style="left:1181px;top:263px;width:1px;height:22px;background:#d4d4d4"></div>
<svg style="left:1152px;top:267px" width="20" height="14"><path d="M1 1v12l7-6z" fill="#222"/><path d="M10 0v14" stroke="#888"/><path d="M19 1v12l-7-6z" fill="#aaa"/></svg>
<svg style="left:1193px;top:266px" width="16" height="16"><path d="M2 0h12L8 6z" fill="#bbb"/><path d="M0 8h16" stroke="#555"/><path d="M2 15h12L8 10z" fill="#222"/></svg>

<div class="sec" style="top:301px;height:23px;line-height:24px">TEXT</div>
<div class="inp" style="left:1033px;top:337px;width:136px;height:26px"></div><div class="a" style="left:1148px;top:338px;width:1px;height:24px;background:#ccc"></div>
<div class="t" style="left:1039px;top:343px;font-size:12.500px;color:#444">Lato</div>
<svg style="left:1154px;top:345px" width="10" height="10"><path d="M0 0h10L5 10z" fill="#555"/></svg>
<div class="inp" style="left:1176px;top:337px;width:75px;height:26px"></div><div class="a" style="left:1230px;top:338px;width:1px;height:24px;background:#ccc"></div>
<div class="t" style="left:1181px;top:343px;font-size:10.500px;color:#444">Light</div>
<svg style="left:1236px;top:345px" width="10" height="10"><path d="M0 0h10L5 10z" fill="#555"/></svg>
<div class="inp" style="left:1033px;top:370px;width:106px;height:25px"></div>
<div class="t" style="left:1041px;top:375px;font-size:10px;color:#aaa">A</div>
<div class="a" style="left:1057px;top:372px;width:80px;height:21px;background:#000"></div>
<div class="inp" style="left:1145px;top:370px;width:106px;height:25px"></div><div class="a" style="left:1230px;top:371px;width:1px;height:23px;background:#ccc"></div>
<div class="t" style="left:1150px;top:376px;font-size:8.500px;color:#777;font-weight:bold">тT</div>
<div class="t pv" style="left:1166px;top:375px">40</div><div class="t u" style="left:1213px;top:376px">PX</div>
<svg style="left:1235px;top:377px" width="11" height="11"><path d="M0 0h11L5.500 11z" fill="#555"/></svg>

<div class="btn" style="left:1033px;top:402px;width:215px;height:22px;border-radius:3px"></div>
<div class="btn" style="left:1033px;top:431px;width:215px;height:22px;border-radius:3px"></div>
<div class="btn" style="left:1033px;top:460px;width:215px;height:22px;border-radius:3px"></div>
<div class="a" style="left:1086px;top:431px;width:54px;height:22px;background:#fff;border:1px solid #ccc"></div>
<div class="a" style="left:1086px;top:460px;width:54px;height:22px;background:#fff;border:1px solid #ccc"></div>
<svg style="left:0;top:0" width="1280" height="960">
<g stroke="#d4d4d4"><path d="M1086.500 402v22M1140.500 402v22M1194.500 402v22M1194.500 431v22M1194.500 460v22"/></g>
<text x="1056" y="417" font-family="DejaVu Sans" font-weight="bold" font-size="10" fill="#333">B</text>
<text x="1110" y="417" font-family="Liberation Serif" font-weight="bold" font-style="italic" font-size="12" fill="#333">I</text>
<text x="1162" y="416" font-family="DejaVu Sans" font-size="10" fill="#333">U</text><path d="M1162 418.500h9" stroke="#333"/>
<path d="M1216 408h10M1215 412.500h12M1218 414v3h6v-3M1219 409v2" fill="none" stroke="#666"/>
<g stroke="#444" stroke-width="1"><path d="M1055 437.500h10M1055 440.500h7M1055 443.500h10M1055 446.500h7"/><path d="M1162 437.500h10M1165 440.500h7M1162 443.500h10M1165 446.500h7"/><path d="M1216 437.500h10M1216 440.500h10M1216 443.500h10M1216 446.500h10"/></g>
<g stroke="#1c78d4"><path d="M1108 437.500h11M1110 440.500h7M1108 443.500h11M1110 446.500h7"/></g>
<g stroke="#333" fill="#333"><path d="M1055 466.500h10M1060 468v8" fill="none"/><path d="M1060 468l2.500 3h-5z" stroke="none"/><path d="M1162 476.500h10M1167 467v8" fill="none"/><path d="M1167 475l2.500-3h-5z" stroke="none"/></g>
<g stroke="#1c78d4" fill="#1c78d4"><path d="M1108.500 471h11" fill="none"/><path d="M1114 468.500l2-3h-4zM1114 473.500l2 3h-4z" stroke="none"/></g>
<circle cx="1221" cy="471" r="4.500" fill="#333"/><circle cx="1221" cy="471" r="5.300" fill="none" stroke="#333" stroke-width="1.800" stroke-dasharray="2.080 2.080"/><circle cx="1221" cy="471" r="1.700" fill="#f3f3f3"/>
</svg>

<div class="sec" style="top:496px;height:23px;line-height:24px">OPACITY</div>
<div class="a" style="left:1033px;top:543px;width:135px;height:4px;background:#aaa;border-radius:2px"></div>
<svg style="left:1166px;top:537px" width="15" height="20"><path d="M1.500 1h12v12l-6 6-6-6z" fill="#fff" stroke="#bbb"/></svg>
<div class="inp" style="left:1190px;top:533px;width:61px;height:25px"></div><div class="t pv" style="left:1197px;top:538px">100</div><div class="t" style="left:1232px;top:539px;font-size:10px;color:#ccc">%</div>

<div class="sec" style="top:571px;height:25px;line-height:26px">DROP SHADOW</div>
<div class="a" style="left:1033px;top:610px;width:13px;height:13px;background:#fff;border:1px solid #666;border-radius:3px"></div>
<div class="t" style="left:1050px;top:611px;font-size:13px;color:#333">Enabled</div>
<div class="inp" style="left:1033px;top:633px;width:218px;height:25px"></div>
<svg style="left:1038px;top:639px" width="14" height="14"><path d="M6 0l5 5-4 4-4-4z" fill="#bbb"/><path d="M12 7l1 2a1 1 0 0 1-2 0z" fill="#bbb"/><path d="M1 13h12" stroke="#ccc"/></svg>
<div class="a" style="left:1057px;top:635px;width:192px;height:21px;background:#7b7b7b"></div>
<div class="t lab" style="left:1033px;top:662px">OPACITY</div>
<div class="track" style="top:693px"></div><div class="fill" style="top:693px;width:100px"></div>
<svg style="left:1131px;top:687px" width="15" height="20"><path d="M1.500 1h12v12l-6 6-6-6z" fill="#fff" stroke="#ccc"/></svg>
<div class="inp" style="left:1190px;top:683px;width:61px;height:25px;background:#f5f5f5;border-color:#ddd"></div><div class="t pv" style="left:1197px;top:687px;color:#999">75</div><div class="t" style="left:1232px;top:689px;font-size:10px;color:#ddd">%</div>
<div class="t lab" style="left:1033px;top:712px">ANGLE</div>
<div class="track" style="top:743px"></div><div class="fill" style="top:743px;width:100px"></div>
<svg style="left:1131px;top:737px" width="15" height="20"><path d="M1.500 1h12v12l-6 6-6-6z" fill="#fff" stroke="#ccc"/></svg>
<div class="inp" style="left:1190px;top:733px;width:61px;height:25px;background:#f5f5f5;border-color:#ddd"></div><div class="t pv" style="left:1197px;top:737px;color:#999">90</div><div class="t" style="left:1238px;top:737px;font-size:10px;color:#ddd">°</div>
<div class="t lab" style="left:1033px;top:762px">DISTANCE</div>
<div class="track" style="top:793px"></div>
<svg style="left:1033px;top:787px" width="15" height="20"><path d="M1.500 1h12v12l-6 6-6-6z" fill="#fff" stroke="#ccc"/></svg>
<div class="inp" style="left:1190px;top:783px;width:61px;height:25px;background:#f5f5f5;border-color:#ddd"></div><div class="t pv" style="left:1197px;top:787px;color:#999">5</div><div class="t" style="left:1232px;top:789px;font-size:9px;color:#ddd">PX</div>
<div class="t lab" style="left:1033px;top:812px">SIZE</div>
<div class="track" style="top:843px"></div><div class="fill" style="top:843px;width:18px"></div>
<svg style="left:1048px;top:837px" width="15" height="20"><path d="M1.500 1h12v12l-6 6-6-6z" fill="#fff" stroke="#ccc"/></svg>
<div class="inp" style="left:1190px;top:833px;width:61px;height:25px;background:#f5f5f5;border-color:#ddd"></div><div class="t pv" style="left:1197px;top:838px;color:#999">5</div><div class="t" style="left:1232px;top:840px;font-size:9px;color:#ddd">PX</div>

<div class="sec" style="top:871px;height:25px;line-height:26px">BLUR</div>
<div class="a" style="left:1033px;top:910px;width:13px;height:13px;background:#fff;border:1px solid #666;border-radius:3px"></div>
<div class="t" style="left:1050px;top:911px;font-size:13px;color:#333">Enabled</div>
<div class="t lab" style="left:1033px;top:932px">SIZE</div>
<div class="inp" style="left:1190px;top:952px;width:61px;height:12px;background:#f5f5f5;border-color:#ddd"></div>
<!-- right scrollbar -->
<div class="a" style="left:1265px;top:152px;width:15px;height:808px;background:#f2f2f2"></div>
<svg style="left:1267px;top:157px" width="9" height="6"><path d="M4.500 0l4 5h-8z" fill="#ccc"/></svg>
<div class="a" style="left:1266px;top:165px;width:11px;height:749px;background:#bdbdbd"></div>
<svg style="left:1267px;top:948px" width="9" height="6"><path d="M0 0h9L4.500 5z" fill="#444"/></svg>
<div class="a" style="left:0;top:959px;width:1280px;height:1px;background:#222"></div>
</body></html>
